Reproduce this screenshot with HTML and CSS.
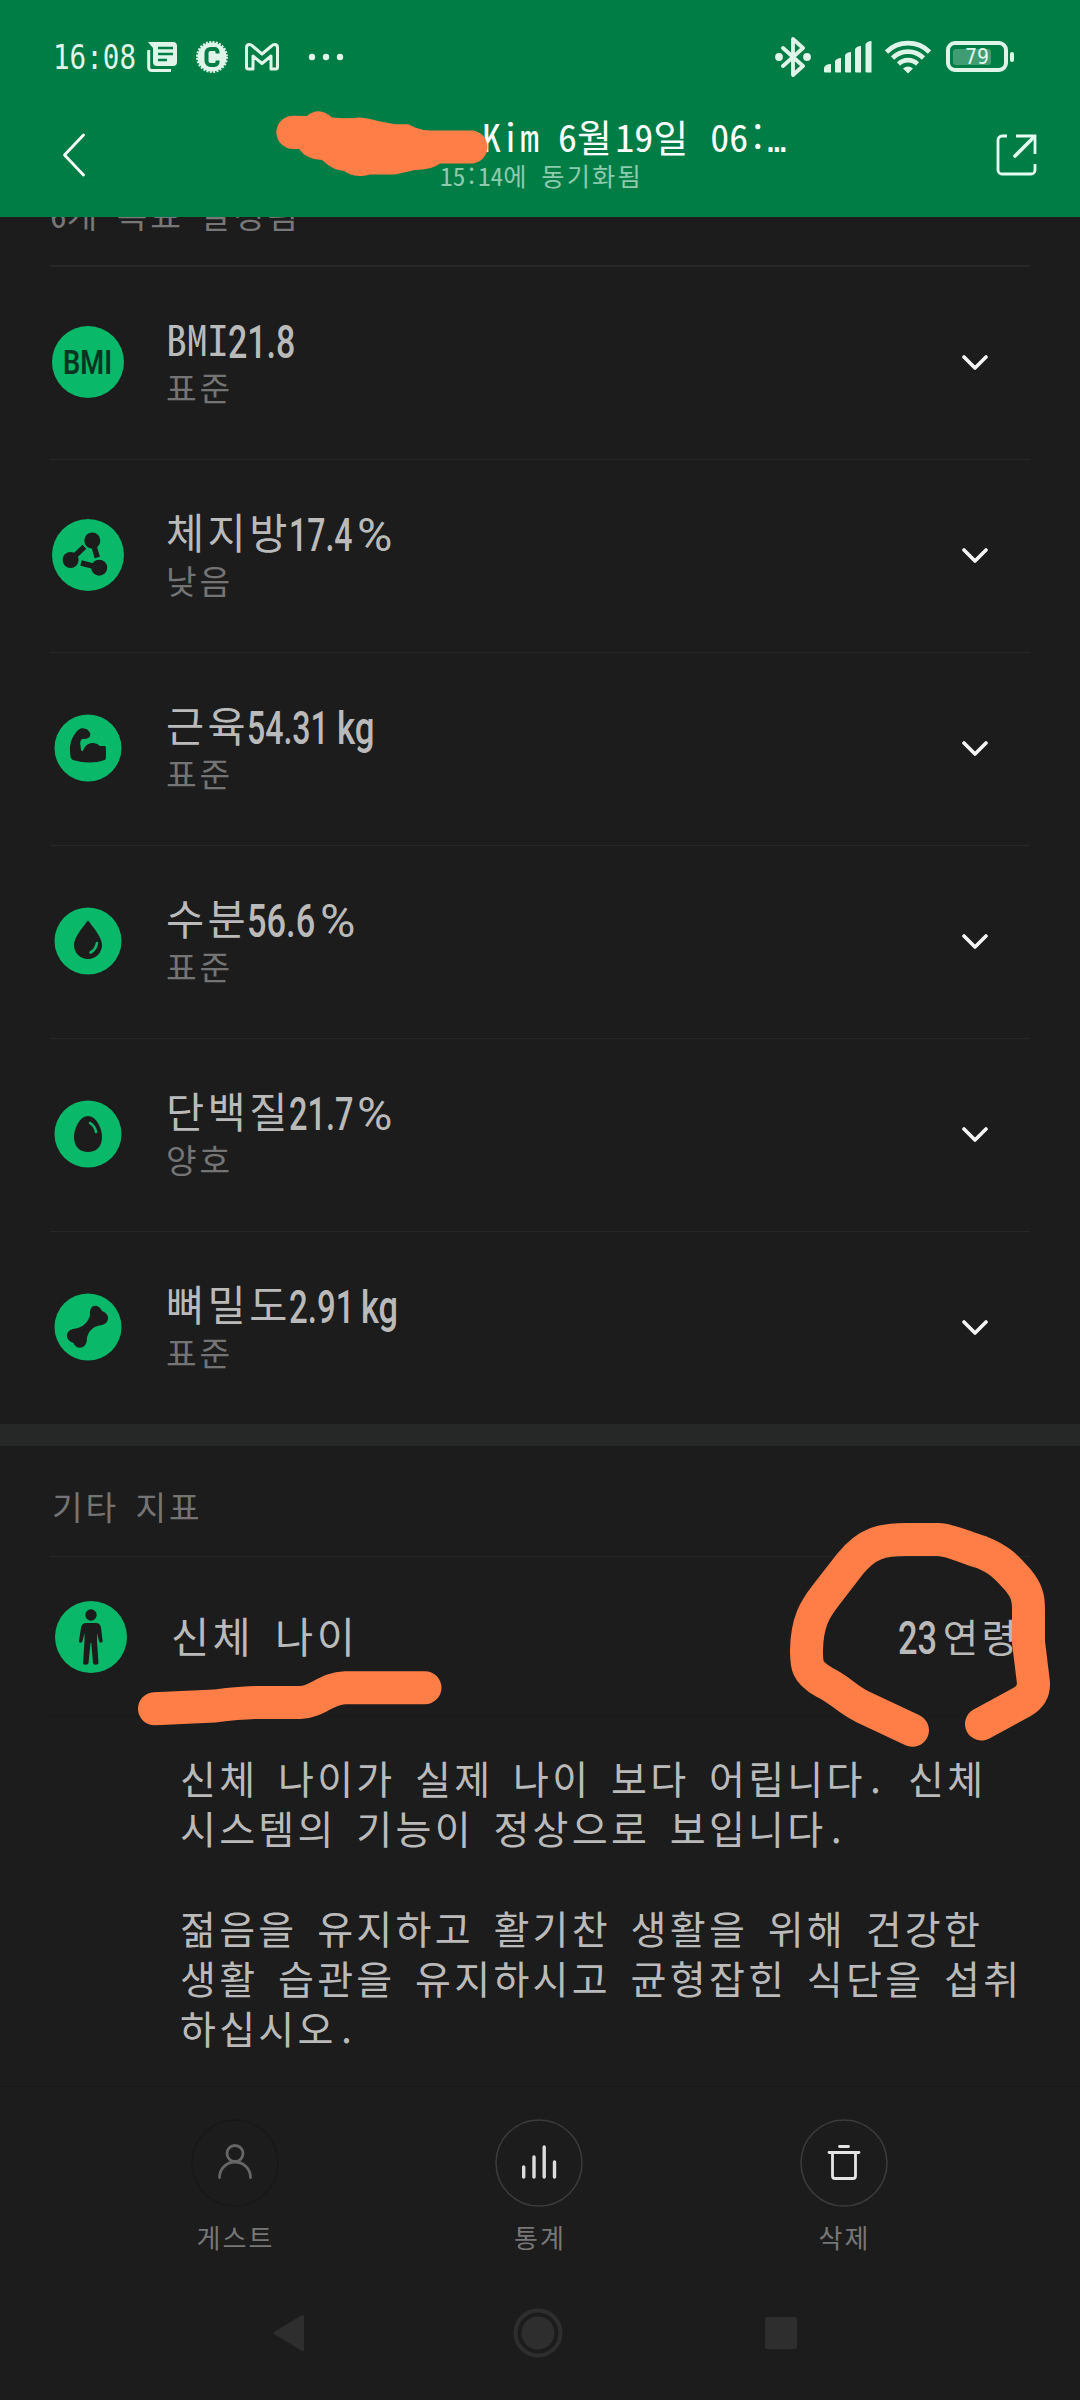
FILE: index.html
```html
<!DOCTYPE html>
<html lang="ko">
<head>
<meta charset="utf-8">
<title>신체 지표</title>
<link rel="stylesheet" href="styles.css">
</head>
<body>
<div class="screen">
  <header class="top">
    <div class="status">
      <div class="status-left">
        <svg class="clock" width="86" height="44"><text x="1" y="34" textLength="83" lengthAdjust="spacingAndGlyphs">16:08</text></svg>
        <svg class="glyph doc" width="30" height="30" viewBox="0 0 30 30"><path fill="#dff5ea" d="M1 0h25a4 4 0 0 1 4 4v16a4 4 0 0 1-4 4H10a4 4 0 0 1-4-4V6z"/><path d="M11 6h15M11 12h15M11 18h9" stroke="#007c45" stroke-width="2.4"/><path d="M1.7 8v17.500a3 3 0 0 0 3 3H24" fill="none" stroke="#dff5ea" stroke-width="3"/></svg>
        <svg class="glyph badge" width="32" height="32" viewBox="0 0 32 32"><circle cx="16" cy="16" r="14.500" fill="#dff5ea"/><circle cx="16" cy="16" r="15" fill="none" stroke="#dff5ea" stroke-width="2" stroke-dasharray="2 1.370"/><path d="M21.500 12.500v-1.500a3 3 0 0 0-3-3h-4a4 4 0 0 0-4 4v8a4 4 0 0 0 4 4h4a3 3 0 0 0 3-3v-1.500" fill="none" stroke="#007c45" stroke-width="4"/></svg>
        <svg class="glyph mail" width="34" height="28" viewBox="0 0 34 28"><path d="M1.500 24V4.500q0-3 3-3 1.500 0 3 1.500L17 11l9.500-8q1.500-1.500 3-1.500 3 0 3 3V24q0 2-2 2h-4.500V13L17 20.500 8 13v13H3.500q-2 0-2-2z" fill="none" stroke="#dff5ea" stroke-width="3" stroke-linejoin="round"/></svg>
        <svg class="glyph dots" width="36" height="8"><circle cx="4" cy="4" r="3.200" fill="#dff5ea"/><circle cx="18" cy="4" r="3.200" fill="#dff5ea"/><circle cx="32" cy="4" r="3.200" fill="#dff5ea"/></svg>
      </div>
      <div class="status-right">
        <svg width="36" height="40" viewBox="0 0 36 40"><path d="M8 11l20 18-10 9V2l10 9L8 29" fill="none" stroke="#dff5ea" stroke-width="3.800" stroke-linejoin="round" stroke-linecap="round"/><circle cx="4" cy="20" r="3.900" fill="#dff5ea"/><circle cx="32" cy="20" r="3.900" fill="#dff5ea"/></svg>
        <svg class="signal" width="48" height="32" viewBox="0 0 48 32"><path fill="#dff5ea" d="M0 31v-4q1-4 7-4v8.500H1zM11 31V20q2-3 6-3v14.500h-5zM21 31V14q2-3 6-3v20.500h-5zM31 31V8q2-3 6-3v26.500h-5zM41.500 31V3q2-3 6-3v31.500h-5z"/></svg>
        <svg class="wifi" width="46" height="34" viewBox="0 0 46 34"><g fill="none" stroke="#dff5ea" stroke-width="4.600"><path d="M1.500 12a30.500 30.500 0 0 1 43 0M7.500 18a22 22 0 0 1 31 0M13.500 24a13.500 13.500 0 0 1 19 0"/></g><path fill="#dff5ea" d="M18 28.500q5-4 10 0L23 33.500z"/></svg>
        <svg class="battery" width="68" height="32" viewBox="0 0 68 32"><rect x="7" y="8" width="38" height="16" rx="3" fill="#409d73"/><rect x="2" y="2" width="58" height="27" rx="7" fill="none" stroke="#dff5ea" stroke-width="4"/><rect x="64" y="11" width="4" height="10" rx="2" fill="#dff5ea"/><text x="19" y="22.500" textLength="24" lengthAdjust="spacingAndGlyphs">79</text></svg>
      </div>
    </div>
    <div class="bar">
      <svg class="back" width="24" height="44" viewBox="0 0 24 44"><path d="M21.500 2L2.500 22l19 20" fill="none" stroke="#fff" stroke-width="2.800" stroke-linecap="round" stroke-linejoin="round"/></svg>
      <div class="heading">
        <div class="heading-title">Kim 6<span class="ko">월</span>19<span class="ko">일</span> 06:<span class="dots-end">…</span></div>
        <div class="heading-sub">15:14<span class="ko">에 동기화됨</span></div>
      </div>
      <svg class="share" width="42" height="42" viewBox="0 0 42 42"><path d="M11 2H6a4 4 0 0 0-4 4v30a4 4 0 0 0 4 4h29a4 4 0 0 0 4-4v-6M20 2h19v18" fill="none" stroke="#e6fff3" stroke-width="2.800"/><path d="M19 22L38 3" stroke="#e6fff3" stroke-width="3.600" stroke-linecap="round"/></svg>
    </div>
  </header>

  <main class="content">
    <div class="goals"><div class="goals-text">6<span class="ko">개 목표 달성됨</span></div></div>
    <section class="metrics">
      <div class="row">
        <svg class="icon" viewBox="0 0 72 72"><circle cx="36" cy="36" r="36" fill="#0ab869"/><text class="icon-text" x="11" y="48" textLength="49" lengthAdjust="spacingAndGlyphs">BMI</text></svg>
        <div class="info"><div class="name">BMI<svg class="value" width="66" height="50"><text transform="translate(0 45) scale(.73 1)">21.8</text></svg></div><div class="state">표준</div></div>
        <svg class="chev" viewBox="0 0 26 16"><path d="M2 2l11 11L24 2"/></svg>
      </div>
      <div class="row">
        <svg class="icon" viewBox="0 0 72 72"><circle cx="36" cy="36" r="36" fill="#0ab869"/><g fill="#1c1c1c"><circle cx="40.300" cy="21.500" r="8"/><circle cx="18.600" cy="41" r="8"/><circle cx="47.200" cy="48.700" r="8"/></g><path d="M18.600 41l13.800-13.300M40.300 21.500l5 17M47.200 48.700L29 44" stroke="#1c1c1c" stroke-width="5.500"/></svg>
        <div class="info"><div class="name"><span class="ko">체지방</span><svg class="value" width="102" height="50"><text transform="translate(-2 45) scale(.69 1)">17.4</text><text class="unit" transform="translate(66 45) scale(1.04 1)">%</text></svg></div><div class="state">낮음</div></div>
        <svg class="chev" viewBox="0 0 26 16"><path d="M2 2l11 11L24 2"/></svg>
      </div>
      <div class="row">
        <svg class="icon" viewBox="0 0 72 72"><circle cx="36" cy="36" r="33.500" fill="#0ab869"/><path fill="#1c1c1c" d="M18.600 45.300Q17.800 40 18 34.700 19 26 24.500 19.700 28 15.500 30.600 16.300 36 16.500 38.200 21.300 38.500 24 37 25.500 34 27.500 30 27 28 29 28.200 31.300L29 38q1 2 2 .5Q32 35 34.800 33 38 30.500 41.700 31q4 .5 6.200 3h5q1 .3 1 1.500v10q0 2-1 2.500-15 5-32 0-2-1-2.300-2.700z"/></svg>
        <div class="info"><div class="name"><span class="ko">근육</span><svg class="value" width="128" height="50"><text transform="translate(-2 45) scale(.69 1)">54.31</text><text transform="translate(88 45) scale(.75 1)">kg</text></svg></div><div class="state">표준</div></div>
        <svg class="chev" viewBox="0 0 26 16"><path d="M2 2l11 11L24 2"/></svg>
      </div>
      <div class="row">
        <svg class="icon" viewBox="0 0 72 72"><circle cx="36" cy="36" r="33.500" fill="#0ab869"/><path fill="#1c1c1c" d="M36 15.500C31 22 22 32 22 40a14 14 0 0 0 28 0C50 32 41 22 36 15.500z"/><path d="M45 38q-1 6.500-6.500 9.500" fill="none" stroke="#0ab869" stroke-width="2.600" stroke-linecap="round"/></svg>
        <div class="info"><div class="name"><span class="ko">수분</span><svg class="value" width="110" height="50"><text transform="translate(-2 45) scale(.74 1)">56.6</text><text class="unit" transform="translate(71 45) scale(1.04 1)">%</text></svg></div><div class="state">표준</div></div>
        <svg class="chev" viewBox="0 0 26 16"><path d="M2 2l11 11L24 2"/></svg>
      </div>
      <div class="row">
        <svg class="icon" viewBox="0 0 72 72"><circle cx="36" cy="36" r="33.500" fill="#0ab869"/><path fill="#1c1c1c" d="M36 18c8 0 14 12 14 21 0 10-6 15-14 15s-14-5-14-15c0-9 6-21 14-21z"/><path d="M38 25q5 3 6 9" fill="none" stroke="#0ab869" stroke-width="2.600" stroke-linecap="round"/></svg>
        <div class="info"><div class="name"><span class="ko">단백질</span><svg class="value" width="102" height="50"><text transform="translate(-2 45) scale(.7 1)">21.7</text><text class="unit" transform="translate(66 45) scale(1.04 1)">%</text></svg></div><div class="state">양호</div></div>
        <svg class="chev" viewBox="0 0 26 16"><path d="M2 2l11 11L24 2"/></svg>
      </div>
      <div class="row">
        <svg class="icon" viewBox="0 0 72 72"><circle cx="36" cy="36" r="33.500" fill="#0ab869"/><path fill="#1c1c1c" d="M38 24C37 12 47 13 50 20c9 3 8 14-3 14.500C41 36 36.500 40 35 47c0 12-11 12-13.500 5C12 49 13 38 24 37.500 31 36 36.500 31 38 24z"/></svg>
        <div class="info"><div class="name"><span class="ko">뼈밀도</span><svg class="value" width="110" height="50"><text transform="translate(-2 45) scale(.71 1)">2.91</text><text transform="translate(70 45) scale(.74 1)">kg</text></svg></div><div class="state">표준</div></div>
        <svg class="chev" viewBox="0 0 26 16"><path d="M2 2l11 11L24 2"/></svg>
      </div>
    </section>

    <section class="others">
      <h2 class="section-title">기타 지표</h2>
      <div class="age">
        <svg class="icon" viewBox="0 0 72 72"><circle cx="36" cy="36" r="36" fill="#0ab869"/><g fill="#1c1c1c"><circle cx="36" cy="14" r="5.700"/><path d="M31 22h10q4 0 5 4.500L47.600 40q0 1.700-1.700 1.700T44 40l-2-8v8l1.500 22q0 1.700-2.700 1.700T38 62l-1.700-20h-.8L33.500 62q0 1.700-2.800 1.700T28 62l1.500-22v-8l-2 8q0 1.700-2 1.700T24 40l2-13.500Q27 22 31 22z"/></g></svg>
        <div class="age-name">신체 나이</div>
        <div class="age-value"><svg class="value" width="40" height="50"><text transform="translate(-1 44) scale(.74 1)">23</text></svg>연령</div>
      </div>
      <div class="advice">
        <p>신체 나이가 실제 나이 보다 어립니다. 신체<br>시스템의 기능이 정상으로 보입니다.</p>
        <p>젊음을 유지하고 활기찬 생활을 위해 건강한<br>생활 습관을 유지하시고 균형잡힌 식단을 섭취<br>하십시오.</p>
      </div>
    </section>
  </main>

  <footer class="actions">
    <div class="action disabled"><svg width="88" height="88" viewBox="0 0 88 88"><circle class="ring" cx="44" cy="44" r="43"/><g fill="none" stroke="#666" stroke-width="2.800" stroke-linecap="round"><circle cx="44" cy="34.500" r="8"/><path d="M28.500 58.500a15.500 15.500 0 0 1 31 0"/></g></svg><span>게스트</span></div>
    <div class="action"><svg width="88" height="88" viewBox="0 0 88 88"><circle class="ring" cx="44" cy="44" r="43"/><path d="M28.700 48v10M39 38v20M49.200 28v30M59.500 43v15" stroke="#dcdcdc" stroke-width="3.400" stroke-linecap="round"/></svg><span>통계</span></div>
    <div class="action"><svg width="88" height="88" viewBox="0 0 88 88"><circle class="ring" cx="44" cy="44" r="43"/><path d="M39.500 27.500h9M29 33.500h30M32.500 34v23q0 2.500 2.500 2.500h18q2.500 0 2.500-2.500V34" fill="none" stroke="#e4e4e4" stroke-width="2.800" stroke-linecap="round"/></svg><span>삭제</span></div>
  </footer>
  <nav class="system">
    <svg width="32" height="38" viewBox="0 0 32 38"><path d="M2 19L29.500 2.500v33z" fill="#2e2e2e" stroke="#2e2e2e" stroke-width="3" stroke-linejoin="round"/></svg>
    <svg width="50" height="50" viewBox="0 0 50 50"><circle cx="25" cy="25" r="22.500" fill="none" stroke="#2e2e2e" stroke-width="4"/><circle cx="25" cy="25" r="16.500" fill="#2e2e2e"/></svg>
    <svg width="32" height="32" viewBox="0 0 32 32"><rect width="32" height="32" rx="2" fill="#2e2e2e"/></svg>
  </nav>

  <svg class="marker" width="1080" height="2400" viewBox="0 0 1080 2400">
    <path fill="#ff7d47" d="M293 115.700L307 116Q319 106 332 117.500 345 119 360 117.500 370 118 378 121L395 124.300H408Q413 126 415 127.500 423 130.500 430 130.500H471A16.500 16.500 0 0 1 471 163.500H440Q432 170 415 170L395 174.500H370Q355 179 344 171 332 170 322 160 307 160 299 149H293A16.500 16.500 0 0 1 293 115.700z"/>
    <g fill="none" stroke="#ff7d47" stroke-width="33" stroke-linecap="round" stroke-linejoin="round">
      <path d="M154.500 1708.700L215 1706Q237 1703 255 1702.500H300C318 1702 326 1688 345 1687.700H425"/>
      <path d="M912.500 1730.300L863 1707C845 1698 842 1691 824 1682 806 1672 806.500 1664 806.500 1650 807 1622 815 1609 826 1595L850 1564C867 1543 882 1539.500 906 1539.500H938C952 1540 966 1548 981 1552 1001 1560 1007 1568 1018 1580 1027 1591 1028.500 1598 1028.500 1610V1642L1033.500 1683Q1034 1695 1022 1702L981.500 1724"/>
    </g>
  </svg>
</div>
</body>
</html>
```
FILE: styles.css
```css
* { box-sizing: border-box; }

body {
  margin: 0;
  background: #1c1c1c;
  font-family: "Noto Sans Mono CJK KR", "Noto Sans CJK KR", sans-serif;
  color: #bababa;
}

svg { display: block; flex: none; }

.screen {
  position: relative;
  display: flex;
  flex-direction: column;
  width: 1080px;
  height: 2400px;
  overflow: hidden;
}

/* Hangul set to full-width cells, spaces kept at half width */
.ko, .state, .section-title, .age-name, .age-value, .advice, .action span {
  letter-spacing: .083em;
  word-spacing: -.08em;
}

/* Header */
.top { height: 217px; background: #007c45; color: #fff; }

.status {
  display: flex;
  justify-content: space-between;
  align-items: center;
  height: 114px;
  padding: 0 66px 0 52px;
}

.status-left, .status-right { display: flex; align-items: center; }
.clock text { font: 33px "DejaVu Sans Mono", monospace; fill: #dff5ea; }
.doc { margin-left: 9px; }
.badge { margin-left: 19px; }
.mail { margin-left: 17px; }
.dots { margin-left: 29px; }
.signal { margin-left: 13px; }
.wifi { margin-left: 13px; }
.battery { margin-left: 15px; }
.battery text { font: 22px "DejaVu Sans Mono", monospace; fill: #dff5ea; }

.bar {
  display: flex;
  align-items: flex-start;
  height: 103px;
  padding: 0 42px 0 62px;
}

.back { margin-top: 19px; }
.share { margin-top: 20px; }
.heading { flex: 1; padding-left: 396px; }
.heading-title { height: 47px; line-height: 44px; font-size: 38px; white-space: nowrap; }
.dots-end { font-family: "DejaVu Sans Mono", monospace; font-size: 32px; line-height: 1; }
.heading-sub {
  width: 208px;
  height: 28px;
  margin: 0 0 0 -42px;
  line-height: 28px;
  font-size: 25.300px;
  color: #8ccbad;
  white-space: nowrap;
}

/* Metric list */
.content { height: 1869px; }

.goals {
  height: 50px;
  margin: 0 50px;
  overflow: hidden;
  border-bottom: 2px solid #252626;
}

.goals-text { margin-top: -27px; line-height: 48px; font-size: 33.300px; color: #777; white-space: nowrap; }

.metrics { height: 1157px; padding: 0 50px; }

.row {
  display: flex;
  align-items: flex-start;
  height: 193px;
  border-bottom: 1px solid #252626;
}

.row:last-child { border-bottom: 0; }
.icon { width: 72px; height: 72px; }
.row .icon { margin: 59px 0 0 2px; }
.icon-text { font: 600 33px Roboto, sans-serif; fill: #08351f; }
.info { flex: 1; padding: 46px 0 0 42px; }
.name { display: flex; height: 50px; line-height: 50px; font-size: 41.500px; white-space: nowrap; }
.value { overflow: visible; letter-spacing: 0; }
.value text { font: 500 46.500px Roboto, sans-serif; fill: #bababa; }
.value .unit { font-weight: 400; }
.state { height: 40px; margin-top: 4px; line-height: 40px; font-size: 33.300px; color: #747474; }
.chev { width: 26px; height: 16px; margin: 88px 42px 0 0; }
.chev path { fill: none; stroke: #f4f4f4; stroke-width: 3.600; stroke-linecap: round; stroke-linejoin: round; }

/* Other indicators */
.others { padding: 0 50px; border-top: 22px solid #262828; }

.section-title {
  height: 111px;
  margin: 0;
  padding: 0 2px;
  border-bottom: 1px solid #252626;
  font-size: 33.300px;
  font-weight: 400;
  line-height: 120px;
  color: #747474;
}

.age {
  display: flex;
  align-items: center;
  height: 160px;
  padding: 0 10px 0 5px;
  border-bottom: 1px solid #191919;
}

.age-name { flex: 1; padding: 0 0 4px 44px; font-size: 41.500px; line-height: 50px; }
.age-value { display: flex; gap: 4px; padding-bottom: 4px; font-size: 38.500px; line-height: 50px; }
.advice { padding: 35px 0 0 130px; font-size: 39.050px; line-height: 50px; white-space: nowrap; }
.advice p { margin: 0 0 50px; }

/* Bottom actions */
.actions {
  display: flex;
  justify-content: center;
  gap: 216.500px;
  height: 194px;
  padding: 32px 2px 0 0;
  border-top: 1px solid #171717;
}

.action { display: flex; flex-direction: column; align-items: center; width: 88px; }
.action span { margin-top: 10px; padding-left: 2px; font-size: 26px; line-height: 40px; color: #777; white-space: nowrap; }
.ring { fill: none; stroke: #3c3c3c; stroke-width: 1.500; }
.disabled .ring { stroke: #181818; }

.system {
  display: flex;
  align-items: center;
  height: 106px;
  padding: 0 0 1px 273px;
}

.system svg:nth-child(2) { margin-left: 207.500px; }
.system svg:nth-child(3) { margin-left: 202.500px; }

/* Hand-drawn marks lie over the whole screen */
.marker { position: absolute; inset: 0; pointer-events: none; }
```
